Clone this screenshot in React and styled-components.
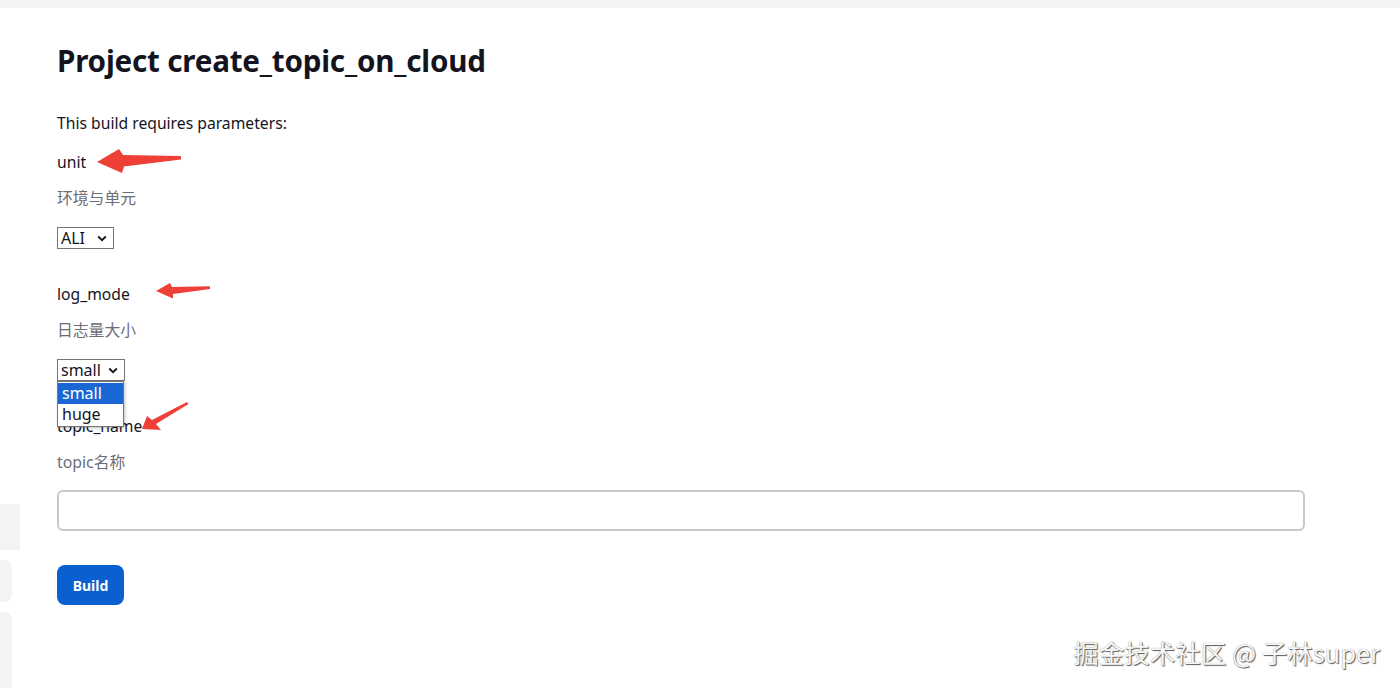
import React from "react";
import styled, { createGlobalStyle } from "styled-components";

const Global = createGlobalStyle`
  html, body { margin: 0; padding: 0; background: #ffffff; }
  body {
    font-family: "Noto Sans", "Noto Sans CJK SC", sans-serif;
    color: #14141f;
    width: 1400px;
    height: 688px;
    overflow: hidden;
  }
  * { box-sizing: border-box; }
`;

const Shell = styled.div`
  position: relative;
  width: 1400px;
  height: 688px;
  display: flex;
  flex-direction: column;
`;

const TopStrip = styled.div`
  height: 8px;
  background: #f4f4f6;
  flex: none;
`;

const Body = styled.div`
  display: flex;
  flex: 1;
`;

const Sidebar = styled.div`
  width: 20px;
  flex: none;
  display: flex;
  flex-direction: column;
  padding-top: 496px;
  gap: 10px;
`;

const SideBlock = styled.div`
  width: ${(p) => p.$w}px;
  height: ${(p) => p.$h}px;
  flex: ${(p) => (p.$grow ? 1 : "none")};
  background: #f3f3f6;
  border-radius: ${(p) => p.$radius || "0"};
`;

const Main = styled.main`
  flex: 1;
  padding: 34px 95px 0 37px;
  position: relative;
`;

const Title = styled.h1`
  margin: 0;
  font-size: 29.6px;
  line-height: 38px;
  font-weight: 700;
  color: #14141f;
  letter-spacing: -0.2px;
`;

const Intro = styled.p`
  margin: 31px 0 0;
  font-size: 15.7px;
  line-height: 24px;
  color: #14141f;
`;

const Param = styled.div`
  margin-top: ${(p) => p.$mt}px;
  position: relative;
`;

const Label = styled.div`
  font-size: 15.7px;
  line-height: 24px;
  color: #14141f;
`;

const Desc = styled.div`
  margin-top: 12px;
  font-size: 15.8px;
  line-height: 24px;
  color: #6d6d78;
`;

const SelectWrap = styled.div`
  margin-top: ${(p) => p.$mt}px;
  position: relative;
  display: inline-flex;
`;

const SelectBox = styled.div`
  width: ${(p) => p.$w}px;
  height: 22px;
  border: 1px solid #767676;
  background: #fff;
  display: flex;
  align-items: center;
  justify-content: space-between;
  padding: 0 6px 0 3px;
  font-size: 16px;
  line-height: 20px;
  color: #14141f;
`;

const Chevron = () => (
  <svg width="10" height="7" viewBox="0 0 10 7">
    <path d="M1.2 1.5 L5 5.2 L8.8 1.5" fill="none" stroke="#14141f" strokeWidth="1.8" />
  </svg>
);

const Menu = styled.div`
  position: absolute;
  left: 0;
  top: 22px;
  width: 67px;
  border: 1px solid #767676;
  background: #fff;
  box-shadow: 1px 1px 3px rgba(0, 0, 0, 0.25);
  z-index: 3;
  padding: 1px 0;
`;

const MenuItem = styled.div`
  height: 21px;
  padding: 0 4px;
  font-size: 16px;
  line-height: 21px;
  color: ${(p) => (p.$active ? "#ffffff" : "#14141f")};
  background: ${(p) => (p.$active ? "#1a67d3" : "transparent")};
`;

const TextInput = styled.input`
  display: block;
  width: 100%;
  height: 41px;
  margin-top: 16px;
  border: 2px solid #c7c8cc;
  border-radius: 6px;
  background: #fff;
  outline: none;
  padding: 0 10px;
  font-size: 15px;
`;

const BuildButton = styled.button`
  margin-top: 34px;
  width: 67px;
  height: 40px;
  border: none;
  border-radius: 8px;
  background: #0b60d1;
  color: #fff;
  font-family: "Noto Sans", sans-serif;
  font-weight: 700;
  font-size: 14px;
  cursor: pointer;
`;

const Annotation = styled.svg`
  position: absolute;
  left: 0;
  top: 0;
  width: 1400px;
  height: 688px;
  pointer-events: none;
  z-index: 5;
`;

const Watermark = styled.div`
  position: absolute;
  right: 20px;
  bottom: 20px;
  font-family: "Noto Sans CJK SC", "Noto Sans", sans-serif;
  font-size: 25.5px;
  line-height: 32px;
  color: #f7f7f7;
  text-shadow: 1px 1px 1px #5a5a5a, 0 0 1px #888;
  z-index: 6;
`;

export default function App() {
  return (
    <Shell>
      <Global />
      <TopStrip />
      <Body>
        <Sidebar>
          <SideBlock $w={20} $h={46} />
          <SideBlock $w={12} $h={42} $radius="0 8px 8px 0" />
          <SideBlock $w={12} $h={80} $grow $radius="0 8px 0 0" />
        </Sidebar>
        <Main>
          <Title>Project create_topic_on_cloud</Title>
          <Intro>This build requires parameters:</Intro>

          <Param $mt={15}>
            <Label>unit</Label>
            <Desc>环境与单元</Desc>
            <SelectWrap $mt={17}>
              <SelectBox $w={57}>
                <span>ALI</span>
                <Chevron />
              </SelectBox>
            </SelectWrap>
          </Param>

          <Param $mt={33}>
            <Label>log_mode</Label>
            <Desc>日志量大小</Desc>
            <SelectWrap $mt={17}>
              <SelectBox $w={68}>
                <span>small</span>
                <Chevron />
              </SelectBox>
              <Menu>
                <MenuItem $active>small</MenuItem>
                <MenuItem>huge</MenuItem>
              </Menu>
            </SelectWrap>
          </Param>

          <Param $mt={33}>
            <Label>topic_name</Label>
            <Desc>topic名称</Desc>
            <TextInput type="text" />
          </Param>

          <BuildButton>Build</BuildButton>
        </Main>
      </Body>

      <Annotation viewBox="0 0 1400 688">
        <polygon
          fill="#ee4037"
          points="97,162 119,149 123,155 181,156 181,159.5 124,166.5 122,173"
        />
        <polygon
          fill="#ee4037"
          points="156,291 170,283 172,287 210,286.3 210,289 173,294 173,298.5"
        />
        <polygon
          fill="#ee4037"
          points="142,429 147,416 152,420 187,402 188.5,404 156,424 161,430"
        />
      </Annotation>

      <Watermark>掘金技术社区 @ 子林super</Watermark>
    </Shell>
  );
}
